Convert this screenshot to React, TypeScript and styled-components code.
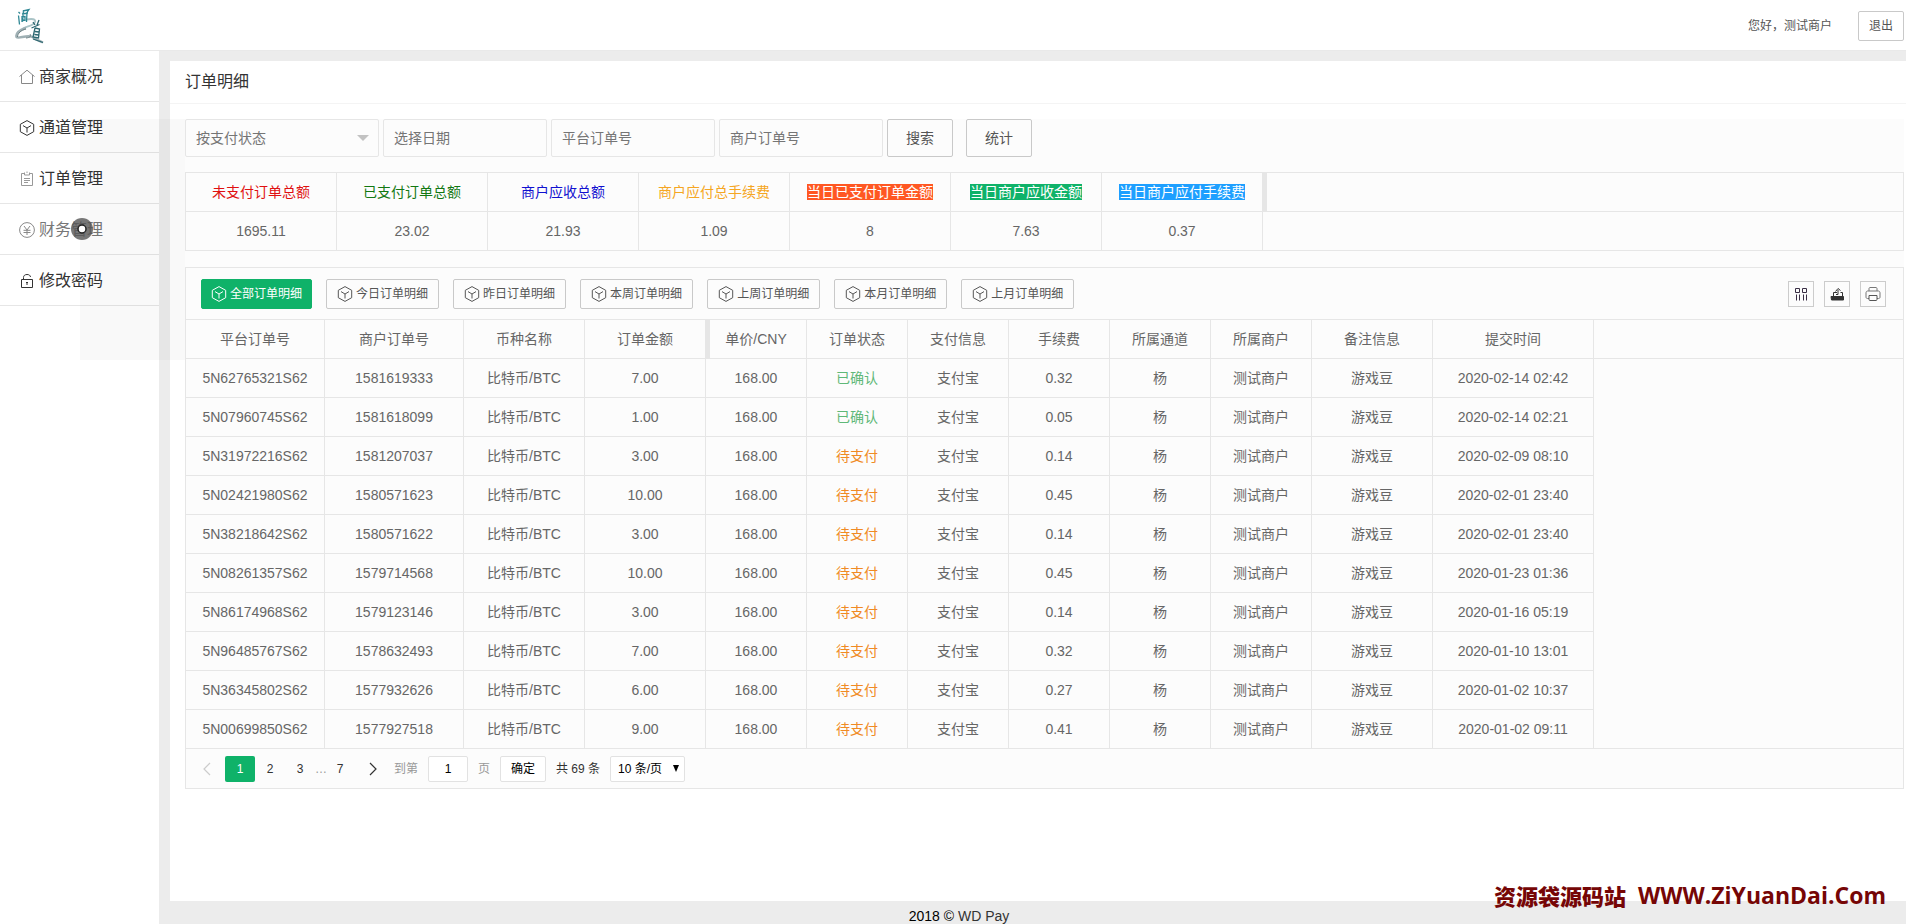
import React from 'react';
import styled, { createGlobalStyle, css } from 'styled-components';

const line = '#e6e6e6';
const green = '#0fb269';

const GlobalStyle = createGlobalStyle`
  *, *::before, *::after { box-sizing: border-box; }
  body {
    margin: 0;
    background: #ececec;
    color: #333;
    font: 400 14px/24px "Liberation Sans", "Noto Sans CJK SC", sans-serif;
  }
  button, input, select { font: inherit; color: inherit; margin: 0; }
  button { cursor: pointer; }
  ul { list-style: none; margin: 0; padding: 0; }
  a { color: inherit; text-decoration: none; }
`;

const Page = styled.div`
  min-height: 100vh;
  display: flex;
  flex-direction: column;
  position: relative;
`;

const Header = styled.header`
  height: 51px;
  padding: 2px 2px 0 15px;
  display: flex;
  align-items: center;
  background: #fff;
  border-bottom: 1px solid #e9e9e9;
`;

const Greeting = styled.span`
  margin-left: auto;
  margin-right: 26px;
  font-size: 12px;
  color: #555;
`;

const OutlineButton = styled.button<{ $large?: boolean }>`
  height: ${p => (p.$large ? 38 : 30)}px;
  padding: 0 ${p => (p.$large ? 18 : 10)}px;
  font-size: ${p => (p.$large ? 14 : 12)}px;
  line-height: 24px;
  background: transparent;
  border: 1px solid #c9c9c9;
  border-radius: 2px;
  color: #555;
`;

const Body = styled.div`
  flex: 1;
  display: flex;
`;

const Sidebar = styled.nav`
  width: 159px;
  flex: none;
  background: #fff;
`;

const MenuLink = styled.a<{ $hover?: boolean }>`
  height: 51px;
  padding: 2px 0 0 19px;
  display: flex;
  align-items: center;
  gap: 4px;
  font-size: 16px;
  color: ${p => (p.$hover ? '#777' : '#333')};
  border-bottom: 1px solid ${line};
`;

const Main = styled.main`
  flex: 1;
  min-width: 0;
  display: flex;
  flex-direction: column;
`;

const Panel = styled.section`
  flex: 1;
  margin: 10px 0 0 11px;
  background: #fff;
`;

const PanelTitle = styled.h1`
  margin: 0;
  height: 43px;
  padding: 0 15px;
  font-size: 16px;
  font-weight: 400;
  line-height: 42px;
  border-bottom: 1px solid #f4f4f4;
`;

const Content = styled.div`
  margin: 15px 2px 0 15px;
  background: #fcfcfc;
`;

const Filters = styled.form`
  display: flex;
  gap: 4px;
  margin-bottom: 15px;

  button + button { margin-left: 9px; }
`;

const field = css`
  height: 38px;
  padding: 0 10px;
  border: 1px solid ${line};
  border-radius: 2px;
  background: transparent;
  color: #757575;
  outline: none;
`;

const TextField = styled.input`
  ${field}
  width: 164px;
  &::placeholder { color: #757575; opacity: 1; }
`;

const SelectWrap = styled.div`
  position: relative;
  width: 194px;

  &::after {
    content: '';
    position: absolute;
    right: 10px;
    top: 16px;
    border: 6px solid transparent;
    border-top-color: #c2c2c2;
    border-bottom: 0;
    pointer-events: none;
  }
`;

const StatusSelect = styled.select`
  ${field}
  width: 100%;
  appearance: none;
`;

const TableBox = styled.div<{ $closed?: boolean }>`
  border: 1px solid ${line};
  border-bottom-width: ${p => (p.$closed ? 1 : 0)}px;
  margin-bottom: ${p => (p.$closed ? 0 : 16)}px;
`;

const DataTable = styled.table`
  width: 100%;
  table-layout: fixed;
  border-collapse: separate;
  border-spacing: 0;
  color: #666;
`;

const Cell = styled.td<{ $tone?: string }>`
  height: 39px;
  padding: 0;
  text-align: center;
  white-space: nowrap;
  color: ${p => p.$tone || 'inherit'};
  border: solid ${line};
  border-width: 0 1px 1px 0;
`;

const HeadCell = styled(Cell).attrs({ as: 'th' })<{ $handle?: boolean }>`
  position: relative;
  font-weight: 400;

  ${p => p.$handle && css`
    &::after {
      content: '';
      position: absolute;
      top: 0;
      right: -5px;
      width: 5px;
      height: 38px;
      background: ${line};
    }
  `}
`;

const Filler = styled.td<{ $lined?: boolean }>`
  padding: 0;
  border-bottom: ${p => (p.$lined ? 1 : 0)}px solid ${line};
`;

const Tag = styled.span<{ $bg: string }>`
  display: inline-block;
  line-height: 16px;
  height: 16px;
  color: #fff;
  background: ${p => p.$bg};
`;

const Toolbar = styled.div`
  height: 52px;
  padding: 0 17px 0 15px;
  display: flex;
  align-items: center;
  gap: 14px;
  border-bottom: 1px solid ${line};
`;

const RangeButton = styled.button<{ $active?: boolean }>`
  height: 30px;
  padding: 0 ${p => (p.$active ? 9 : 10)}px;
  display: flex;
  align-items: center;
  gap: 3px;
  font-size: 12px;
  white-space: nowrap;
  border-radius: 2px;
  border: 1px solid ${p => (p.$active ? green : '#c9c9c9')};
  background: ${p => (p.$active ? green : 'transparent')};
  color: ${p => (p.$active ? '#fff' : '#555')};
`;

const Tools = styled.div`
  margin-left: auto;
  display: flex;
  gap: 10px;
`;

const ToolButton = styled.button`
  width: 26px;
  height: 26px;
  padding: 0;
  display: flex;
  align-items: center;
  justify-content: center;
  background: transparent;
  border: 1px solid #ccc;
`;

const Pager = styled.div`
  height: 39px;
  padding-left: 9px;
  display: flex;
  align-items: center;
  font-size: 12px;
`;

const PageButton = styled.button<{ $current?: boolean; $muted?: boolean; $wide?: boolean }>`
  width: ${p => (p.$wide ? 36 : 30)}px;
  height: 26px;
  padding: 0 ${p => (p.$muted ? 6 : 0)}px 0 0;
  display: flex;
  align-items: center;
  justify-content: center;
  border: 0;
  border-radius: 2px;
  background: ${p => (p.$current ? green : 'transparent')};
  color: ${p => (p.$current ? '#fff' : p.$muted ? '#ccc' : '#333')};
`;

const PagerText = styled.span`
  color: #333;
`;

const Ellipsis = styled.span`
  width: 10px;
  color: #999;
`;

const JumpLabel = styled.label`
  display: flex;
  align-items: center;
  gap: 10px;
  margin-left: 3px;
  color: #999;
`;

const pagerField = css`
  height: 26px;
  border: 1px solid #e2e2e2;
  border-radius: 2px;
  background: #fff;
  color: #000;
`;

const JumpInput = styled.input`
  ${pagerField}
  width: 40px;
  padding: 0;
  text-align: center;
`;

const ConfirmButton = styled.button`
  ${pagerField}
  width: 46px;
  padding: 0;
  margin: 0 10px;
`;

const SizeWrap = styled.div`
  position: relative;
  margin-left: 10px;

  &::after {
    content: '';
    position: absolute;
    right: 6px;
    top: 9px;
    border: 3px solid transparent;
    border-top: 7px solid #000;
    border-bottom: 0;
    pointer-events: none;
  }
`;

const SizeSelect = styled.select`
  ${pagerField}
  width: 75px;
  padding: 0 7px;
  appearance: none;
`;

const Footer = styled.footer`
  height: 23px;
  padding-right: 147px;
  text-align: center;
  line-height: 30px;
  color: #000;
  overflow: hidden;

  a { color: #333; }
`;

const Watermark = styled.div`
  position: absolute;
  right: 20px;
  bottom: 17px;
  display: flex;
  gap: 12px;
  color: #760606;
  font: 900 22px/24px "Noto Sans CJK SC", sans-serif;
  pointer-events: none;
`;

const WatermarkUrl = styled.span`
  font: 700 23px/24px "Open Sans", sans-serif;
`;

const Shade = styled.div`
  position: absolute;
  left: 80px;
  top: 119px;
  width: 105px;
  height: 241px;
  background: rgba(0, 0, 0, 0.024);
  pointer-events: none;
`;

const Pointer = styled.svg`
  position: absolute;
  left: 70px;
  top: 217px;
  pointer-events: none;
`;

type IconProps = { size?: number; color?: string; children?: React.ReactNode };

const Icon = ({ size = 16, color = 'currentColor', children }: IconProps) => (
  <svg width={size} height={size} viewBox="0 0 16 16" fill="none" stroke={color} aria-hidden="true">
    {children}
  </svg>
);

const CubeIcon = () => (
  <Icon>
    <path d="M8 .6 14.700 4.300V11.700L8 15.400 1.300 11.700V4.300Z" />
    <path d="M4 5.600 8 8l4-2.400M8 8v4.500" />
  </Icon>
);

const HomeIcon = () => (
  <Icon color="#888">
    <path d="M.5 7.500 8 1.200l7.500 6.300M2.500 6v8.500h11V6" />
  </Icon>
);

const NoteIcon = () => (
  <Icon color="#999">
    <path d="M5 2.500H2.500v12h11v-12H11M5.500 1.500v2.500h5V1.500M8 .5v1.500M5 7.500h6M5 9.500h6M5 11.500h4" />
  </Icon>
);

const YuanIcon = () => (
  <Icon color="#888">
    <circle cx="8" cy="8" r="7.400" />
    <path d="m5 4 3 4 3-4M8 8v5M4.500 8.300h7M4.500 10.500h7" />
  </Icon>
);

const LockIcon = () => (
  <Icon color="#333">
    <path d="M2.500 6.500h11v8h-11zM4.500 6.500V4.500C4.500 2.500 6 1.500 8 1.500s3.300.8 3.500 2.500" />
    <path d="M8 9v3M7 9.500h2" />
  </Icon>
);

const ColumnsIcon = () => (
  <Icon color="#3a2f45">
    <path d="M2.500 2.500h4v4h-4zM9.500 2.500h4v4h-4zM3.500 8.500v6M6.500 8.500v6M10.500 8.500v6M13.500 8.500v6" />
  </Icon>
);

const ExportIcon = () => (
  <Icon color="#333">
    <path d="M2 10.500h12.500v3.500h-12z" fill="#333" />
    <path d="M4.500 10V6.500H8M13.500 10V6.500h-2M7 8.500h2V4M6.500 5.500 9 2.500l2.500 2" />
  </Icon>
);

const PrinterIcon = () => (
  <Icon color="#777">
    <path d="M4 5V2.500C4 2 4.500 1.500 5 1.500h6c.5 0 1 .5 1 1V5M4 12.500H2.500C1.500 12.500 1 12 1 11V7c0-1 .5-2 1.500-2h11c1 0 1.500 1 1.500 2v4c0 1-.5 1.500-1.500 1.500H12" />
    <path d="M4 9.500h8v4c0 .6-.4 1-1 1H5c-.6 0-1-.4-1-1z" stroke="#555" />
  </Icon>
);

const Chevron = ({ right }: { right?: boolean }) => (
  <svg width="8" height="14" viewBox="0 0 8 14" fill="none" stroke="currentColor" strokeWidth="1.200" aria-hidden="true">
    <path d={right ? 'M1 1l6 6-6 6' : 'M7 1 1 7l6 6'} />
  </svg>
);

const Logo = () => (
  <svg width="30" height="36" viewBox="0 0 30 36" fill="none" role="img" aria-label="logo">
    <path d="M12 11.500C17 10.500 21 11 20 14C18.500 18 12 18 8 20.500" stroke="#a9c3c6" strokeWidth="2" />
    <path d="M11 20C4 21.500 .5 26 1.500 29C3 31 11 27 16 28.500C20 30.500 24 33 28 34.500" stroke="#9fb0b4" strokeWidth="2.400" />
    <path d="M2.500 29C2.500 25.500 6 22 11 21M11 30c4-.5 5.500-1.500 4-4" stroke="#6c7f83" strokeWidth="1" />
    <path d="M3.500 4 5 5.500M3.500 7.500l1 9M8 3l6-1.500-2 3-.5 9.500M7 6l6-1M6.500 9l4-.5M6.500 12.500l4-.5M7 8v6M10 8v5M8.500 2l-1 12" stroke="#2f8794" strokeWidth="1.300" />
    <path d="M18 14l2 3M24 12l-2 5M16.500 20l8-3.500M20 20l-2 9 5.500 1 1-9-4.500-1M20 23.500l4 .5M19.500 26.500l4 .5M18 31l10 3.500" stroke="#2b6670" strokeWidth="1.300" />
  </svg>
);

const menu = [
  { label: '商家概况', icon: <HomeIcon /> },
  { label: '通道管理', icon: <CubeIcon /> },
  { label: '订单管理', icon: <NoteIcon /> },
  { label: '财务管理', icon: <YuanIcon />, hover: true },
  { label: '修改密码', icon: <LockIcon /> },
];

const totals = [
  { label: '未支付订单总额', value: '1695.11', width: 151, tone: '#e01010' },
  { label: '已支付订单总额', value: '23.02', width: 151, tone: '#127812' },
  { label: '商户应收总额', value: '21.93', width: 151, tone: '#1010d0' },
  { label: '商户应付总手续费', value: '1.09', width: 151, tone: '#f5a623' },
  { label: '当日已支付订单金额', value: '8', width: 161, bg: '#ff5722' },
  { label: '当日商户应收金额', value: '7.63', width: 151, bg: green },
  { label: '当日商户应付手续费', value: '0.37', width: 161, bg: '#1e9fff' },
];

const ranges = ['全部', '今日', '昨日', '本周', '上周', '本月', '上月'];

const columns: [string, number][] = [
  ['平台订单号', 139], ['商户订单号', 139], ['币种名称', 121], ['订单金额', 121],
  ['单价/CNY', 101], ['订单状态', 101], ['支付信息', 101], ['手续费', 101],
  ['所属通道', 101], ['所属商户', 101], ['备注信息', 121], ['提交时间', 161],
];

const orders = [
  ['5N62765321S62', '1581619333', '7.00', true, '0.32', '2020-02-14 02:42'],
  ['5N07960745S62', '1581618099', '1.00', true, '0.05', '2020-02-14 02:21'],
  ['5N31972216S62', '1581207037', '3.00', false, '0.14', '2020-02-09 08:10'],
  ['5N02421980S62', '1580571623', '10.00', false, '0.45', '2020-02-01 23:40'],
  ['5N38218642S62', '1580571622', '3.00', false, '0.14', '2020-02-01 23:40'],
  ['5N08261357S62', '1579714568', '10.00', false, '0.45', '2020-01-23 01:36'],
  ['5N86174968S62', '1579123146', '3.00', false, '0.14', '2020-01-16 05:19'],
  ['5N96485767S62', '1578632493', '7.00', false, '0.32', '2020-01-10 13:01'],
  ['5N36345802S62', '1577932626', '6.00', false, '0.27', '2020-01-02 10:37'],
  ['5N00699850S62', '1577927518', '9.00', false, '0.41', '2020-01-02 09:11'],
] as const;

const TotalsTable = () => (
  <TableBox>
    <DataTable>
      <colgroup>
        {totals.map(t => <col key={t.label} width={t.width} />)}
        <col />
      </colgroup>
      <thead>
        <tr>
          {totals.map((t, i) => (
            <HeadCell key={t.label} $tone={t.tone} $handle={i === totals.length - 1}>
              {t.bg ? <Tag $bg={t.bg}>{t.label}</Tag> : t.label}
            </HeadCell>
          ))}
          <Filler $lined />
        </tr>
      </thead>
      <tbody>
        <tr>
          {totals.map(t => <Cell key={t.label}>{t.value}</Cell>)}
          <Filler $lined />
        </tr>
      </tbody>
    </DataTable>
  </TableBox>
);

const OrdersTable = () => (
  <DataTable>
    <colgroup>
      {columns.map(([name, width]) => <col key={name} width={width} />)}
      <col />
    </colgroup>
    <thead>
      <tr>
        {columns.map(([name]) => (
          <HeadCell key={name} $handle={name === '订单金额'}>{name}</HeadCell>
        ))}
        <Filler $lined />
      </tr>
    </thead>
    <tbody>
      {orders.map(([id, merchantId, amount, confirmed, fee, time], i) => (
        <tr key={id}>
          <Cell>{id}</Cell>
          <Cell>{merchantId}</Cell>
          <Cell>比特币/BTC</Cell>
          <Cell>{amount}</Cell>
          <Cell>168.00</Cell>
          <Cell $tone={confirmed ? '#5fb878' : '#f08a24'}>{confirmed ? '已确认' : '待支付'}</Cell>
          <Cell>支付宝</Cell>
          <Cell>{fee}</Cell>
          <Cell>杨</Cell>
          <Cell>测试商户</Cell>
          <Cell>游戏豆</Cell>
          <Cell>{time}</Cell>
          <Filler $lined={i === orders.length - 1} />
        </tr>
      ))}
    </tbody>
  </DataTable>
);

const Pagination = () => (
  <Pager>
    <PageButton $muted aria-label="上一页"><Chevron /></PageButton>
    <PageButton $current>1</PageButton>
    <PageButton>2</PageButton>
    <PageButton>3</PageButton>
    <Ellipsis>…</Ellipsis>
    <PageButton>7</PageButton>
    <PageButton $wide aria-label="下一页"><Chevron right /></PageButton>
    <JumpLabel>
      到第
      <JumpInput defaultValue="1" />
      页
    </JumpLabel>
    <ConfirmButton>确定</ConfirmButton>
    <PagerText>共 69 条</PagerText>
    <SizeWrap>
      <SizeSelect aria-label="每页条数">
        <option>10 条/页</option>
        <option>20 条/页</option>
      </SizeSelect>
    </SizeWrap>
  </Pager>
);

export default function App() {
  return (
    <Page>
      <GlobalStyle />
      <Header>
        <Logo />
        <Greeting>您好，测试商户</Greeting>
        <OutlineButton>退出</OutlineButton>
      </Header>
      <Body>
        <Sidebar>
          <ul>
            {menu.map(m => (
              <li key={m.label}>
                <MenuLink href="#" $hover={m.hover}>{m.icon}{m.label}</MenuLink>
              </li>
            ))}
          </ul>
        </Sidebar>
        <Main>
          <Panel>
            <PanelTitle>订单明细</PanelTitle>
            <Content>
              <Filters>
                <SelectWrap>
                  <StatusSelect aria-label="支付状态">
                    <option>按支付状态</option>
                    <option>已确认</option>
                    <option>待支付</option>
                  </StatusSelect>
                </SelectWrap>
                <TextField placeholder="选择日期" aria-label="选择日期" />
                <TextField placeholder="平台订单号" aria-label="平台订单号" />
                <TextField placeholder="商户订单号" aria-label="商户订单号" />
                <OutlineButton $large type="button">搜索</OutlineButton>
                <OutlineButton $large type="button">统计</OutlineButton>
              </Filters>
              <TotalsTable />
              <TableBox $closed>
                <Toolbar>
                  {ranges.map((r, i) => (
                    <RangeButton key={r} $active={i === 0}><CubeIcon />{r}订单明细</RangeButton>
                  ))}
                  <Tools>
                    <ToolButton aria-label="筛选列"><ColumnsIcon /></ToolButton>
                    <ToolButton aria-label="导出"><ExportIcon /></ToolButton>
                    <ToolButton aria-label="打印"><PrinterIcon /></ToolButton>
                  </Tools>
                </Toolbar>
                <OrdersTable />
                <Pagination />
              </TableBox>
            </Content>
          </Panel>
          <Footer>2018 © <a href="#">WD Pay</a></Footer>
        </Main>
      </Body>
      <Shade />
      <Pointer width="24" height="24" viewBox="0 0 24 24" aria-hidden="true">
        <circle cx="12" cy="12" r="11" fill="#555" fillOpacity=".8" />
        <circle cx="12" cy="12" r="4" fill="#fff" stroke="#222" strokeWidth="1.500" />
      </Pointer>
      <Watermark>
        资源袋源码站
        <WatermarkUrl>WWW.ZiYuanDai.Com</WatermarkUrl>
      </Watermark>
    </Page>
  );
}
